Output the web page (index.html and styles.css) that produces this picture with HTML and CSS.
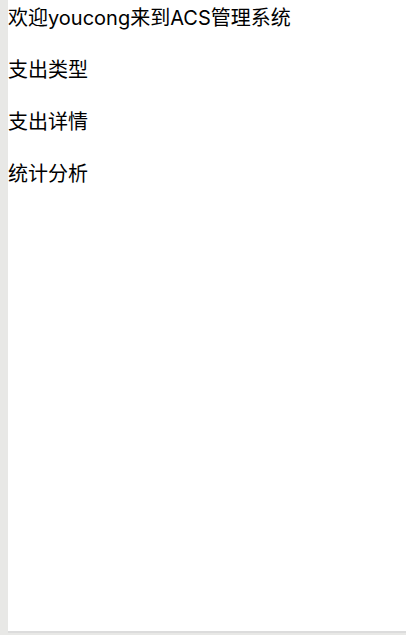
FILE: index.html
```html
<!DOCTYPE html>
<html lang="zh">
<head>
<meta charset="utf-8">
<title>ACS管理系统</title>
<link rel="stylesheet" href="styles.css">
</head>
<body>
<div class="frame">
  <p class="item">欢迎youcong来到ACS管理系统</p>
  <p class="item">支出类型</p>
  <p class="item">支出详情</p>
  <p class="item">统计分析</p>
</div>
</body>
</html>
```
FILE: styles.css
```css
html, body {
  margin: 0;
  padding: 0;
  height: 100%;
}
body {
  background: #e8e8e6;
  font-family: "Inter", "Noto Sans CJK SC", sans-serif;
}
.frame {
  margin-left: 8px;
  height: 633px;
  background: #ffffff;
  border-bottom: 2px solid #dcdcdc;
  box-sizing: border-box;
  padding-top: 4px;
  display: flex;
  flex-direction: column;
  gap: 24px;
}
.item {
  margin: 0;
  font-size: 20px;
  line-height: 28px;
  color: #000;
}
```
